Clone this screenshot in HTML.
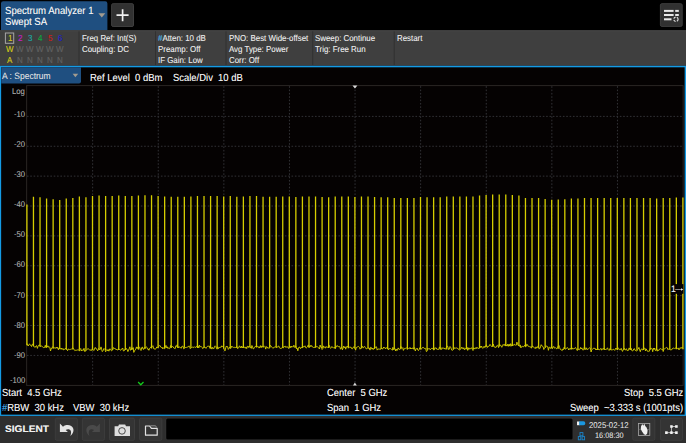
<!DOCTYPE html>
<html><head><meta charset="utf-8"><title>Spectrum Analyzer</title>
<style>
html,body{margin:0;padding:0;background:#000;}
body{width:686px;height:443px;position:relative;overflow:hidden;font-family:"Liberation Sans",Arial,sans-serif;}
.t{position:absolute;white-space:pre;transform:scaleY(1.09) skewX(0.05deg);}
.a{position:absolute;left:0;top:0;}
</style></head><body>

<svg class="a" width="686" height="443" viewBox="0 0 686 443"><path d="M1 30.4V3.4A2.2 2.2 0 0 1 3.2 1.2H105.2A2.2 2.2 0 0 1 107.4 3.4V30.4Z" fill="#1f4f80"/><path d="M98.3 13.3H105.3L101.8 17.6Z" fill="#a39c90"/><rect x="111.60" y="3.70" width="21.90" height="22.80" rx="1.5" fill="#313131" stroke="#3e3e3e" stroke-width="1"/><path d="M122.6 9.2V21.2M116.5 15.2H128.6" stroke="#f0f0f0" stroke-width="1.7" fill="none"/><rect x="660.40" y="3.70" width="21.80" height="22.70" rx="1.5" fill="#313131" stroke="#3e3e3e" stroke-width="1"/><g transform="translate(660 3)"><g fill="#e8e8e8"><rect x="4" y="6.9" width="9.6" height="2"/><rect x="15.2" y="6.9" width="3.6" height="2"/><rect x="4" y="11" width="9.6" height="2"/><rect x="15.2" y="11" width="3.6" height="2"/><rect x="4" y="15.3" width="7.5" height="2"/></g><circle cx="15.9" cy="16.3" r="2.2" fill="none" stroke="#e8e8e8" stroke-width="1.1" stroke-dasharray="2.2 1.2"/></g><rect x="0" y="30.3" width="686" height="35.6" fill="#3f3f3f"/><rect x="0" y="30.3" width="686" height="1" fill="#474747"/><rect x="78.5" y="31.3" width="1" height="34" fill="#313131"/><rect x="155.0" y="31.3" width="1" height="34" fill="#313131"/><rect x="225.5" y="31.3" width="1" height="34" fill="#313131"/><rect x="312.2" y="31.3" width="1" height="34" fill="#313131"/><rect x="393.7" y="31.3" width="1" height="34" fill="#313131"/><rect x="5.4" y="33" width="8.3" height="10.3" fill="none" stroke="#a6a6a6" stroke-width="1"/><rect x="0" y="65" width="686" height="0.9" fill="#343436"/><rect x="0" y="65.8" width="686" height="350.2" fill="#149ae4"/><rect x="1.15" y="67.3" width="683.5" height="347.35" fill="#050202"/><path d="M1.25 67.3H81V81.4A2 2 0 0 1 79 83.4H1.25Z" fill="#1f4f80"/><path d="M72.6 73.7H78.2L75.4 77.3Z" fill="#a39c90"/><rect x="0" y="415.9" width="686" height="27.1" fill="#2e2e2e"/><rect x="55.30" y="418.10" width="22.00" height="22.20" rx="1.5" fill="#343434" stroke="#3d3d3d" stroke-width="1"/><rect x="82.40" y="418.10" width="22.00" height="22.20" rx="1.5" fill="#343434" stroke="#3d3d3d" stroke-width="1"/><rect x="109.50" y="418.10" width="25.00" height="22.20" rx="1.5" fill="#343434" stroke="#3d3d3d" stroke-width="1"/><rect x="139.60" y="418.10" width="22.20" height="22.20" rx="1.5" fill="#343434" stroke="#3d3d3d" stroke-width="1"/><rect x="632.80" y="418.10" width="22.00" height="22.20" rx="1.5" fill="#343434" stroke="#3d3d3d" stroke-width="1"/><rect x="660.60" y="418.10" width="21.80" height="22.20" rx="1.5" fill="#343434" stroke="#3d3d3d" stroke-width="1"/><rect x="165.6" y="418" width="407.6" height="22.1" rx="2" fill="#373737"/><rect x="166.2" y="418.6" width="406.4" height="20.9" rx="1.5" fill="#000"/></svg>
<svg class="a" width="686" height="443" viewBox="0 0 686 443"><rect x="26.65" y="85.60000000000001" width="656.5" height="299.8" fill="none" stroke="#2b2624" stroke-width="1"/><g stroke="#323236" stroke-width="1" stroke-dasharray="1.6 1.75" fill="none"><path d="M26.9 116.38H682.9"/><path d="M92.65 86.2V385.00"/><path d="M26.9 146.26H682.9"/><path d="M158.25 86.2V385.00"/><path d="M26.9 176.14H682.9"/><path d="M223.85 86.2V385.00"/><path d="M26.9 206.02H682.9"/><path d="M289.45 86.2V385.00"/><path d="M26.9 235.90H682.9"/><path d="M355.05 86.2V385.00"/><path d="M26.9 265.78H682.9"/><path d="M420.65 86.2V385.00"/><path d="M26.9 295.66H682.9"/><path d="M486.25 86.2V385.00"/><path d="M26.9 325.54H682.9"/><path d="M551.85 86.2V385.00"/><path d="M26.9 355.42H682.9"/><path d="M617.45 86.2V385.00"/></g><path d="M26.90 204.6V345.3M33.46 196.8V346.3M40.02 197.2V346.8M46.58 198.5V347.8M53.14 199.3V348.4M59.70 200.1V348.8M66.26 198.5V349.5M72.82 197.9V349.6M79.38 196.6V349.7M85.94 197.2V349.8M92.50 196.0V349.8M99.06 195.6V349.8M105.62 196.0V349.9M112.18 196.0V349.9M118.74 195.6V350.0M125.30 196.0V350.0M131.86 196.0V349.9M138.42 195.4V349.5M144.98 195.2V349.0M151.54 195.2V348.5M158.10 196.0V348.1M164.66 196.4V348.1M171.22 196.8V348.0M177.78 196.8V347.9M184.34 196.8V347.8M190.90 196.4V347.8M197.46 196.0V347.9M204.02 196.0V348.1M210.58 196.0V348.3M217.14 196.0V348.4M223.70 196.4V348.4M230.26 196.0V348.2M236.82 196.8V347.9M243.38 196.4V347.7M249.94 196.0V347.6M256.50 196.0V347.6M263.06 196.8V347.6M269.62 196.8V347.6M276.18 196.8V347.6M282.74 196.4V347.7M289.30 196.4V347.7M295.86 197.0V347.7M302.42 196.4V347.7M308.98 196.4V347.7M315.54 196.4V347.8M322.10 197.0V347.9M328.66 197.2V348.0M335.22 196.4V348.1M341.78 196.4V348.2M348.34 196.4V348.3M354.90 197.0V348.4M361.46 196.4V348.4M368.02 196.4V348.5M374.58 197.0V348.7M381.14 197.2V348.9M387.70 197.2V349.1M394.26 197.9V349.2M400.82 197.9V349.3M407.38 197.9V349.4M413.94 197.9V349.4M420.50 197.0V349.4M427.06 197.2V349.4M433.62 197.2V349.4M440.18 197.2V349.4M446.74 196.6V349.4M453.30 196.6V349.3M459.86 196.6V349.3M466.42 196.4V349.2M472.98 196.6V349.0M479.54 195.6V348.0M486.10 195.0V347.0M492.66 194.4V346.7M499.22 194.4V346.5M505.78 194.4V346.1M512.34 195.0V345.9M518.90 195.4V345.9M525.46 197.9V346.5M532.02 197.9V347.2M538.58 197.9V347.7M545.14 198.9V347.8M551.70 199.7V348.2M558.26 199.5V348.7M564.82 199.3V349.1M571.38 198.5V349.4M577.94 198.5V349.4M584.50 198.1V349.5M591.06 198.1V349.6M597.62 197.9V349.7M604.18 198.1V349.9M610.74 197.9V350.0M617.30 197.9V350.1M623.86 197.9V350.1M630.42 198.1V350.1M636.98 198.1V350.0M643.54 198.1V349.9M650.10 198.1V349.8M656.66 198.5V349.8M663.22 198.1V349.7M669.78 198.1V349.5M676.34 197.4V349.3M682.90 197.4V349.2" fill="none" stroke="#d6ce00" stroke-width="1.3"/><path d="M26.9 343.5 L27.6 344.9 L28.2 346.0 L28.9 344.8 L29.5 343.8 L30.2 344.9 L30.8 345.7 L31.5 346.5 L32.1 344.5 L32.8 344.1 L33.5 346.1 L34.1 346.3 L34.8 347.4 L35.4 347.1 L36.1 346.0 L36.7 345.6 L37.4 348.4 L38.1 346.2 L38.7 345.3 L39.4 344.8 L40.0 346.0 L40.7 346.4 L41.3 346.0 L42.0 346.3 L42.6 346.8 L43.3 347.4 L44.0 348.0 L44.6 347.4 L45.3 345.3 L45.9 347.5 L46.6 345.9 L47.2 346.9 L47.9 345.8 L48.5 347.2 L49.2 346.7 L49.9 347.7 L50.5 351.0 L51.2 348.4 L51.8 348.7 L52.5 346.7 L53.1 347.3 L53.8 348.4 L54.5 347.8 L55.1 348.2 L55.8 348.1 L56.4 347.0 L57.1 348.3 L57.7 347.3 L58.4 349.8 L59.0 348.0 L59.7 348.9 L60.4 348.4 L61.0 349.3 L61.7 348.0 L62.3 349.4 L63.0 348.6 L63.6 349.9 L64.3 349.6 L64.9 349.1 L65.6 348.1 L66.3 349.5 L66.9 349.5 L67.6 350.7 L68.2 348.9 L68.9 349.5 L69.5 349.6 L70.2 349.4 L70.9 349.3 L71.5 349.2 L72.2 348.5 L72.8 347.9 L73.5 348.4 L74.1 349.5 L74.8 350.6 L75.4 350.3 L76.1 350.4 L76.8 350.1 L77.4 350.0 L78.1 349.5 L78.7 349.9 L79.4 351.1 L80.0 349.2 L80.7 348.5 L81.3 351.0 L82.0 349.8 L82.7 350.3 L83.3 350.3 L84.0 348.3 L84.6 351.4 L85.3 351.4 L85.9 349.8 L86.6 350.1 L87.3 349.5 L87.9 348.4 L88.6 348.9 L89.2 349.5 L89.9 350.4 L90.5 350.1 L91.2 349.5 L91.8 350.6 L92.5 348.7 L93.2 349.9 L93.8 350.5 L94.5 349.2 L95.1 347.4 L95.8 348.0 L96.4 349.2 L97.1 349.8 L97.7 350.9 L98.4 348.6 L99.1 349.1 L99.7 349.9 L100.4 349.2 L101.0 346.9 L101.7 349.6 L102.3 351.6 L103.0 350.8 L103.7 348.7 L104.3 348.7 L105.0 349.4 L105.6 351.8 L106.3 350.4 L106.9 349.6 L107.6 350.9 L108.2 349.6 L108.9 351.2 L109.6 349.0 L110.2 348.8 L110.9 349.9 L111.5 350.9 L112.2 350.3 L112.8 349.8 L113.5 347.6 L114.1 348.3 L114.8 348.5 L115.5 348.7 L116.1 349.8 L116.8 349.1 L117.4 350.1 L118.1 349.6 L118.7 349.1 L119.4 349.4 L120.1 349.8 L120.7 350.3 L121.4 349.1 L122.0 349.1 L122.7 348.0 L123.3 350.7 L124.0 351.1 L124.6 349.6 L125.3 349.0 L126.0 348.1 L126.6 349.3 L127.3 349.6 L127.9 351.6 L128.6 350.1 L129.2 348.7 L129.9 346.8 L130.5 350.2 L131.2 349.7 L131.9 347.8 L132.5 349.1 L133.2 347.6 L133.8 352.4 L134.5 350.9 L135.1 350.0 L135.8 349.1 L136.5 346.9 L137.1 348.4 L137.8 347.3 L138.4 349.2 L139.1 346.8 L139.7 347.5 L140.4 349.7 L141.0 350.5 L141.7 347.8 L142.4 346.9 L143.0 349.1 L143.7 349.4 L144.3 347.6 L145.0 347.5 L145.6 347.4 L146.3 346.9 L146.9 347.3 L147.6 349.2 L148.3 349.0 L148.9 350.3 L149.6 348.4 L150.2 347.9 L150.9 346.9 L151.5 347.5 L152.2 346.4 L152.9 345.7 L153.5 348.0 L154.2 349.2 L154.8 348.8 L155.5 349.2 L156.1 348.2 L156.8 347.0 L157.4 347.5 L158.1 347.2 L158.8 346.3 L159.4 345.6 L160.1 345.6 L160.7 347.1 L161.4 347.6 L162.0 347.0 L162.7 348.8 L163.3 347.9 L164.0 348.2 L164.7 348.8 L165.3 346.9 L166.0 345.4 L166.6 347.8 L167.3 346.8 L167.9 348.6 L168.6 348.0 L169.3 348.6 L169.9 348.4 L170.6 345.5 L171.2 347.7 L171.9 346.8 L172.5 346.5 L173.2 346.8 L173.8 348.0 L174.5 348.4 L175.2 348.6 L175.8 345.9 L176.5 346.4 L177.1 344.8 L177.8 346.7 L178.4 347.8 L179.1 346.6 L179.7 347.4 L180.4 347.5 L181.1 348.3 L181.7 346.6 L182.4 346.3 L183.0 346.3 L183.7 348.8 L184.3 348.6 L185.0 347.4 L185.7 347.5 L186.3 347.4 L187.0 347.4 L187.6 347.0 L188.3 346.8 L188.9 345.9 L189.6 346.3 L190.2 348.7 L190.9 348.0 L191.6 347.5 L192.2 347.1 L192.9 347.3 L193.5 347.6 L194.2 346.7 L194.8 347.3 L195.5 347.5 L196.1 346.6 L196.8 346.4 L197.5 346.1 L198.1 346.0 L198.8 348.0 L199.4 345.1 L200.1 346.7 L200.7 346.6 L201.4 346.6 L202.1 347.4 L202.7 348.6 L203.4 347.8 L204.0 347.4 L204.7 346.9 L205.3 347.3 L206.0 348.4 L206.6 347.3 L207.3 346.4 L208.0 346.1 L208.6 346.2 L209.3 346.0 L209.9 348.4 L210.6 348.2 L211.2 347.5 L211.9 349.1 L212.5 347.3 L213.2 348.4 L213.9 348.7 L214.5 346.4 L215.2 345.9 L215.8 346.5 L216.5 348.4 L217.1 349.2 L217.8 346.8 L218.5 348.6 L219.1 347.6 L219.8 347.4 L220.4 347.2 L221.1 347.3 L221.7 345.9 L222.4 346.4 L223.0 346.3 L223.7 348.0 L224.4 349.9 L225.0 350.9 L225.7 348.0 L226.3 346.1 L227.0 347.0 L227.6 346.6 L228.3 349.4 L228.9 348.6 L229.6 347.1 L230.3 348.4 L230.9 348.3 L231.6 346.1 L232.2 346.7 L232.9 347.1 L233.5 347.4 L234.2 347.6 L234.9 347.1 L235.5 347.5 L236.2 346.8 L236.8 346.3 L237.5 348.6 L238.1 347.9 L238.8 347.8 L239.4 345.8 L240.1 346.8 L240.8 347.9 L241.4 346.0 L242.1 348.0 L242.7 346.9 L243.4 347.5 L244.0 347.0 L244.7 347.3 L245.3 348.3 L246.0 346.9 L246.7 348.6 L247.3 346.5 L248.0 346.0 L248.6 347.5 L249.3 346.0 L249.9 346.4 L250.6 347.8 L251.3 348.4 L251.9 345.5 L252.6 347.2 L253.2 348.9 L253.9 348.6 L254.5 347.1 L255.2 346.4 L255.8 346.6 L256.5 345.8 L257.2 346.5 L257.8 346.7 L258.5 346.8 L259.1 348.1 L259.8 347.0 L260.4 345.6 L261.1 347.8 L261.7 346.1 L262.4 346.4 L263.1 346.8 L263.7 346.6 L264.4 345.9 L265.0 346.6 L265.7 349.1 L266.3 346.8 L267.0 346.8 L267.7 348.1 L268.3 348.0 L269.0 348.0 L269.6 348.1 L270.3 345.3 L270.9 345.8 L271.6 346.9 L272.2 347.5 L272.9 348.4 L273.6 347.8 L274.2 347.0 L274.9 347.1 L275.5 346.8 L276.2 347.2 L276.8 347.8 L277.5 346.9 L278.1 346.2 L278.8 346.0 L279.5 347.9 L280.1 348.5 L280.8 348.3 L281.4 348.2 L282.1 348.1 L282.7 347.3 L283.4 347.8 L284.1 346.2 L284.7 346.7 L285.4 346.3 L286.0 347.6 L286.7 346.6 L287.3 346.9 L288.0 347.4 L288.6 348.5 L289.3 346.6 L290.0 346.0 L290.6 347.7 L291.3 346.1 L291.9 347.3 L292.6 346.6 L293.2 346.9 L293.9 345.2 L294.5 347.4 L295.2 346.7 L295.9 346.1 L296.5 349.0 L297.2 348.2 L297.8 350.8 L298.5 348.2 L299.1 347.0 L299.8 347.2 L300.5 348.7 L301.1 347.4 L301.8 347.6 L302.4 347.7 L303.1 346.3 L303.7 347.1 L304.4 346.6 L305.0 345.8 L305.7 347.7 L306.4 347.9 L307.0 347.3 L307.7 346.2 L308.3 344.9 L309.0 347.2 L309.6 347.0 L310.3 345.4 L310.9 346.7 L311.6 345.5 L312.3 346.8 L312.9 347.2 L313.6 347.5 L314.2 347.4 L314.9 347.4 L315.5 346.1 L316.2 346.6 L316.9 346.5 L317.5 346.8 L318.2 347.4 L318.8 347.9 L319.5 349.0 L320.1 345.0 L320.8 347.2 L321.4 347.0 L322.1 349.5 L322.8 348.6 L323.4 345.9 L324.1 347.4 L324.7 346.8 L325.4 348.2 L326.0 346.5 L326.7 347.1 L327.3 347.2 L328.0 347.2 L328.7 346.8 L329.3 345.4 L330.0 347.5 L330.6 348.4 L331.3 347.6 L331.9 346.5 L332.6 347.5 L333.3 348.0 L333.9 347.4 L334.6 347.5 L335.2 348.9 L335.9 346.7 L336.5 346.8 L337.2 345.5 L337.8 346.5 L338.5 346.6 L339.2 346.4 L339.8 346.7 L340.5 349.2 L341.1 347.8 L341.8 347.6 L342.4 349.8 L343.1 348.0 L343.7 346.0 L344.4 347.8 L345.1 346.8 L345.7 349.2 L346.4 346.8 L347.0 347.0 L347.7 346.0 L348.3 347.5 L349.0 346.7 L349.7 347.5 L350.3 347.3 L351.0 347.1 L351.6 348.6 L352.3 348.9 L352.9 348.1 L353.6 346.9 L354.2 346.6 L354.9 347.8 L355.6 350.2 L356.2 347.8 L356.9 347.0 L357.5 346.9 L358.2 346.5 L358.8 346.6 L359.5 347.4 L360.1 349.2 L360.8 348.1 L361.5 347.4 L362.1 346.1 L362.8 347.7 L363.4 347.8 L364.1 346.6 L364.7 346.5 L365.4 347.6 L366.1 348.8 L366.7 348.7 L367.4 348.3 L368.0 347.7 L368.7 348.2 L369.3 348.0 L370.0 350.1 L370.6 347.3 L371.3 347.5 L372.0 349.2 L372.6 348.0 L373.3 349.5 L373.9 348.3 L374.6 348.3 L375.2 347.8 L375.9 346.7 L376.5 346.9 L377.2 350.1 L377.9 349.2 L378.5 349.0 L379.2 349.3 L379.8 349.0 L380.5 349.4 L381.1 348.2 L381.8 348.0 L382.5 349.2 L383.1 348.2 L383.8 347.0 L384.4 347.9 L385.1 347.7 L385.7 348.9 L386.4 347.8 L387.0 347.2 L387.7 347.9 L388.4 349.9 L389.0 348.7 L389.7 348.7 L390.3 348.6 L391.0 348.8 L391.6 349.5 L392.3 350.2 L392.9 347.3 L393.6 349.7 L394.3 348.8 L394.9 348.4 L395.6 351.0 L396.2 349.0 L396.9 350.7 L397.5 350.1 L398.2 347.9 L398.9 349.1 L399.5 349.5 L400.2 348.8 L400.8 346.4 L401.5 347.9 L402.1 348.4 L402.8 347.6 L403.4 350.4 L404.1 348.9 L404.8 348.4 L405.4 348.4 L406.1 347.9 L406.7 347.9 L407.4 348.7 L408.0 349.1 L408.7 348.4 L409.3 348.6 L410.0 347.4 L410.7 349.0 L411.3 348.1 L412.0 348.9 L412.6 347.9 L413.3 348.1 L413.9 348.9 L414.6 347.6 L415.3 351.0 L415.9 349.2 L416.6 348.8 L417.2 348.1 L417.9 350.2 L418.5 350.5 L419.2 349.4 L419.8 347.6 L420.5 348.0 L421.2 349.3 L421.8 348.4 L422.5 347.5 L423.1 347.4 L423.8 347.7 L424.4 348.6 L425.1 348.1 L425.7 348.7 L426.4 351.6 L427.1 351.1 L427.7 348.2 L428.4 349.0 L429.0 348.9 L429.7 348.7 L430.3 349.8 L431.0 348.7 L431.7 348.4 L432.3 348.4 L433.0 348.6 L433.6 350.0 L434.3 349.8 L434.9 347.7 L435.6 348.1 L436.2 347.9 L436.9 349.4 L437.6 349.2 L438.2 349.8 L438.9 348.9 L439.5 346.9 L440.2 348.9 L440.8 349.0 L441.5 349.4 L442.1 347.6 L442.8 348.6 L443.5 348.1 L444.1 348.0 L444.8 349.0 L445.4 349.2 L446.1 348.0 L446.7 346.9 L447.4 345.9 L448.1 347.6 L448.7 349.7 L449.4 348.9 L450.0 346.5 L450.7 347.4 L451.3 348.9 L452.0 350.4 L452.6 350.2 L453.3 349.4 L454.0 349.0 L454.6 347.7 L455.3 348.1 L455.9 348.2 L456.6 347.8 L457.2 348.6 L457.9 348.3 L458.5 348.9 L459.2 350.1 L459.9 349.7 L460.5 349.3 L461.2 348.5 L461.8 347.1 L462.5 348.2 L463.1 349.1 L463.8 347.7 L464.5 349.7 L465.1 348.5 L465.8 349.0 L466.4 348.3 L467.1 347.3 L467.7 350.4 L468.4 347.8 L469.0 349.4 L469.7 348.2 L470.4 348.8 L471.0 347.8 L471.7 348.0 L472.3 349.3 L473.0 350.5 L473.6 347.9 L474.3 348.2 L474.9 349.1 L475.6 347.7 L476.3 348.6 L476.9 347.2 L477.6 348.2 L478.2 348.2 L478.9 348.8 L479.5 348.0 L480.2 346.2 L480.9 347.6 L481.5 346.0 L482.2 347.5 L482.8 348.4 L483.5 347.6 L484.1 346.2 L484.8 347.6 L485.4 346.8 L486.1 345.2 L486.8 345.7 L487.4 347.5 L488.1 346.2 L488.7 346.3 L489.4 345.9 L490.0 344.4 L490.7 345.3 L491.3 346.4 L492.0 346.4 L492.7 346.0 L493.3 344.0 L494.0 346.9 L494.6 347.0 L495.3 347.3 L495.9 347.6 L496.6 345.9 L497.3 345.3 L497.9 346.1 L498.6 347.6 L499.2 344.5 L499.9 345.3 L500.5 345.0 L501.2 346.2 L501.8 347.3 L502.5 345.7 L503.2 344.4 L503.8 345.4 L504.5 345.3 L505.1 343.9 L505.8 346.1 L506.4 345.1 L507.1 346.1 L507.7 344.2 L508.4 346.3 L509.1 344.1 L509.7 346.1 L510.4 343.7 L511.0 346.3 L511.7 345.1 L512.3 343.7 L513.0 344.7 L513.7 345.4 L514.3 344.3 L515.0 344.5 L515.6 345.3 L516.3 345.1 L516.9 342.1 L517.6 344.2 L518.2 345.5 L518.9 345.6 L519.6 346.4 L520.2 344.9 L520.9 347.9 L521.5 346.7 L522.2 346.1 L522.8 346.8 L523.5 346.8 L524.1 346.0 L524.8 345.2 L525.5 346.8 L526.1 346.5 L526.8 344.2 L527.4 344.6 L528.1 346.3 L528.7 346.4 L529.4 346.6 L530.1 347.1 L530.7 346.8 L531.4 348.2 L532.0 346.3 L532.7 346.2 L533.3 347.0 L534.0 347.6 L534.6 347.8 L535.3 348.6 L536.0 346.8 L536.6 348.1 L537.3 347.7 L537.9 346.2 L538.6 346.8 L539.2 349.1 L539.9 348.3 L540.5 346.9 L541.2 344.7 L541.9 345.9 L542.5 346.2 L543.2 347.0 L543.8 349.5 L544.5 348.4 L545.1 347.8 L545.8 346.4 L546.5 345.9 L547.1 346.8 L547.8 346.8 L548.4 350.3 L549.1 347.6 L549.7 346.9 L550.4 348.5 L551.0 347.8 L551.7 346.4 L552.4 348.7 L553.0 347.6 L553.7 346.4 L554.3 347.8 L555.0 348.3 L555.6 347.6 L556.3 348.6 L556.9 348.9 L557.6 347.3 L558.3 345.9 L558.9 345.3 L559.6 347.5 L560.2 349.3 L560.9 349.5 L561.5 350.0 L562.2 350.6 L562.9 348.9 L563.5 349.6 L564.2 347.2 L564.8 349.0 L565.5 349.1 L566.1 348.6 L566.8 348.2 L567.4 347.5 L568.1 348.6 L568.8 350.0 L569.4 348.6 L570.1 349.3 L570.7 348.2 L571.4 348.9 L572.0 347.8 L572.7 349.0 L573.3 348.6 L574.0 349.1 L574.7 348.3 L575.3 347.5 L576.0 348.2 L576.6 349.7 L577.3 350.6 L577.9 348.8 L578.6 349.6 L579.3 349.7 L579.9 349.4 L580.6 347.4 L581.2 348.9 L581.9 347.9 L582.5 349.8 L583.2 349.9 L583.8 349.7 L584.5 346.5 L585.2 349.0 L585.8 349.6 L586.5 347.8 L587.1 349.7 L587.8 349.2 L588.4 348.8 L589.1 348.2 L589.7 347.8 L590.4 348.3 L591.1 352.0 L591.7 349.8 L592.4 349.4 L593.0 348.5 L593.7 348.3 L594.3 348.4 L595.0 348.1 L595.7 349.8 L596.3 349.0 L597.0 350.0 L597.6 348.1 L598.3 349.9 L598.9 349.3 L599.6 349.9 L600.2 349.2 L600.9 348.3 L601.6 350.2 L602.2 349.0 L602.9 349.0 L603.5 348.3 L604.2 349.3 L604.8 348.9 L605.5 349.5 L606.1 349.7 L606.8 348.7 L607.5 347.8 L608.1 349.5 L608.8 350.3 L609.4 350.2 L610.1 348.4 L610.7 349.8 L611.4 349.9 L612.1 349.8 L612.7 349.9 L613.4 349.2 L614.0 349.6 L614.7 350.4 L615.3 349.1 L616.0 348.0 L616.6 349.1 L617.3 349.6 L618.0 347.7 L618.6 348.4 L619.3 349.9 L619.9 349.4 L620.6 349.6 L621.2 348.3 L621.9 350.2 L622.5 351.4 L623.2 349.7 L623.9 348.8 L624.5 348.2 L625.2 350.1 L625.8 349.7 L626.5 348.7 L627.1 350.6 L627.8 350.5 L628.5 350.3 L629.1 347.9 L629.8 349.1 L630.4 350.0 L631.1 348.3 L631.7 350.2 L632.4 351.0 L633.0 350.8 L633.7 349.0 L634.4 348.6 L635.0 350.2 L635.7 350.6 L636.3 350.9 L637.0 350.9 L637.6 349.6 L638.3 349.0 L638.9 347.4 L639.6 349.8 L640.3 351.7 L640.9 349.4 L641.6 348.9 L642.2 349.9 L642.9 349.8 L643.5 348.0 L644.2 348.3 L644.9 348.0 L645.5 351.0 L646.2 348.9 L646.8 350.0 L647.5 351.3 L648.1 351.6 L648.8 351.1 L649.4 351.2 L650.1 348.4 L650.8 348.7 L651.4 348.4 L652.1 348.8 L652.7 351.7 L653.4 348.0 L654.0 349.5 L654.7 348.0 L655.3 350.3 L656.0 350.7 L656.7 349.0 L657.3 351.2 L658.0 349.7 L658.6 350.6 L659.3 349.8 L659.9 348.7 L660.6 348.7 L661.3 348.9 L661.9 349.7 L662.6 349.4 L663.2 351.5 L663.9 349.4 L664.5 348.7 L665.2 348.3 L665.8 348.1 L666.5 347.4 L667.2 347.7 L667.8 349.6 L668.5 349.2 L669.1 348.8 L669.8 349.2 L670.4 350.0 L671.1 349.7 L671.7 349.8 L672.4 348.5 L673.1 348.5 L673.7 348.0 L674.4 348.5 L675.0 347.9 L675.7 348.2 L676.3 348.4 L677.0 348.4 L677.7 348.4 L678.3 348.1 L679.0 349.9 L679.6 348.5 L680.3 347.6 L680.9 348.6 L681.6 347.5 L682.2 347.3 L682.9 348.4" fill="none" stroke="#d2ca00" stroke-width="0.95" stroke-linejoin="round"/><path d="M352.5 85.6H357.4L354.95 88.5Z" fill="#d8d8d8"/><path d="M353 385.4H356.8L354.9 382.5Z" fill="#d8d8d8"/><path d="M138.1 382L140.8 384.8L143.5 382" fill="none" stroke="#14cc1c" stroke-width="1.25"/><rect x="670.9" y="284.1" width="12.5" height="9.7" fill="#050202"/><path d="M675.2 289.5H682" stroke="#d0d0d0" stroke-width="0.65" fill="none"/><path d="M681 288.3L683.3 289.5L681 290.7Z" fill="#e8e8e8"/></svg>
<svg class="a" width="686" height="443" viewBox="0 0 686 443"><path d="M59.9 423.6V432.1H67.9L65.7 430C67.5 428.8 70.2 429 70.9 431.3C71.3 432.8 70.9 434.3 70.3 435.9C72.6 433.8 73.9 431.5 73.4 428.9C72.6 425.6 68.5 424.3 65.5 425.3C64.5 425.6 63.7 426 63 426.7Z" fill="#e4e4e4"/><g transform="translate(159.8 0) scale(-1 1)"><path d="M59.9 423.6V432.1H67.9L65.7 430C67.5 428.8 70.2 429 70.9 431.3C71.3 432.8 70.9 434.3 70.3 435.9C72.6 433.8 73.9 431.5 73.4 428.9C72.6 425.6 68.5 424.3 65.5 425.3C64.5 425.6 63.7 426 63 426.7Z" fill="#4a4a4a"/></g><path d="M114.6 426.2H118.2L119 424.6H125.2L126 426.2H130V436H114.6Z" fill="#dedede"/><circle cx="122" cy="430.9" r="3.3" fill="#dedede" stroke="#3a3a3a" stroke-width="0.9"/><path d="M145.5 426H149.6L151.4 428.4H157.2V435.2H145.5Z" fill="none" stroke="#e2e2e2" stroke-width="1.2" stroke-linejoin="round"/><path d="M150.3 425.8H155.6L156.6 427.4" fill="none" stroke="#9a9a9a" stroke-width="0.9"/><rect x="577" y="421.5" width="2.6" height="3.7" fill="#f0f0f0"/><path d="M579.3 421.3H583.4A1.9 1.95 0 0 1 583.4 425.3H579.3Z" fill="#1b97df"/><g fill="none" stroke="#1b86cc" stroke-width="0.9"><rect x="580" y="432.6" width="2.9" height="3.2"/><rect x="578.3" y="436.6" width="2.5" height="3.2"/><rect x="582.1" y="436.6" width="2.5" height="3.2"/></g><g fill="none" stroke="#a8a8a8" stroke-width="0.8"><rect x="638.4" y="423.5" width="11.4" height="12"/><path d="M638.4 429.5H649.8M644.1 423.5V435.5" stroke="#808080" stroke-width="0.5"/></g><path d="M641 426.6L642.2 424L643.4 425.8L644.2 423.8L645.4 426.2L646.6 427.6L647.6 430.6L647.2 433.4L645.8 435L644 434.2L642 431.6L640.8 429Z" fill="#f0f0f0"/><g fill="#f2f2f2"><rect x="670.2" y="425.2" width="2.5" height="2.6"/><rect x="675.1" y="425.2" width="2.6" height="2.6"/><rect x="665.1" y="431.3" width="2.6" height="2.7"/><rect x="670.2" y="431.3" width="2.5" height="2.7"/><rect x="675.1" y="431.3" width="2.6" height="2.7"/></g><path d="M671.45 426V433M671 426.5H676M666 432.65H677" stroke="#f2f2f2" stroke-width="0.7" fill="none"/></svg>
<div class="t" style="left:4.5px;top:5.07px;font-size:9.6px;line-height:12px;color:#f2f2f2;text-shadow:0 0 0.6px rgba(242,242,242,0.55);transform-origin:left 9.33px;">Spectrum Analyzer 1</div>
<div class="t" style="left:4.5px;top:16.37px;font-size:9.6px;line-height:12px;color:#f2f2f2;text-shadow:0 0 0.6px rgba(242,242,242,0.55);transform-origin:left 9.33px;">Swept SA</div>
<div class="t" style="left:7.8px;top:33.63px;font-size:8px;line-height:10px;color:#c9c11c;text-shadow:0 0 0.6px rgba(201,193,28,0.55);transform-origin:left 7.77px;">1</div>
<div class="t" style="left:6.2px;top:44.63px;font-size:8px;line-height:10px;color:#c9c11c;text-shadow:0 0 0.6px rgba(201,193,28,0.55);transform-origin:left 7.77px;">W</div>
<div class="t" style="left:7.3px;top:55.53px;font-size:8px;line-height:10px;color:#c9c11c;text-shadow:0 0 0.6px rgba(201,193,28,0.55);transform-origin:left 7.77px;">A</div>
<div class="t" style="left:17.8px;top:33.63px;font-size:8px;line-height:10px;color:#c01fc0;text-shadow:0 0 0.6px rgba(192,31,192,0.55);transform-origin:left 7.77px;">2</div>
<div class="t" style="left:16.2px;top:44.63px;font-size:8px;line-height:10px;color:#5f5f5f;text-shadow:0 0 0.6px rgba(95,95,95,0.55);transform-origin:left 7.77px;">W</div>
<div class="t" style="left:17.1px;top:55.53px;font-size:8px;line-height:10px;color:#5f5f5f;text-shadow:0 0 0.6px rgba(95,95,95,0.55);transform-origin:left 7.77px;">N</div>
<div class="t" style="left:27.8px;top:33.63px;font-size:8px;line-height:10px;color:#1fa3a3;text-shadow:0 0 0.6px rgba(31,163,163,0.55);transform-origin:left 7.77px;">3</div>
<div class="t" style="left:26.2px;top:44.63px;font-size:8px;line-height:10px;color:#5f5f5f;text-shadow:0 0 0.6px rgba(95,95,95,0.55);transform-origin:left 7.77px;">W</div>
<div class="t" style="left:27.1px;top:55.53px;font-size:8px;line-height:10px;color:#5f5f5f;text-shadow:0 0 0.6px rgba(95,95,95,0.55);transform-origin:left 7.77px;">N</div>
<div class="t" style="left:37.8px;top:33.63px;font-size:8px;line-height:10px;color:#12a040;text-shadow:0 0 0.6px rgba(18,160,64,0.55);transform-origin:left 7.77px;">4</div>
<div class="t" style="left:36.2px;top:44.63px;font-size:8px;line-height:10px;color:#5f5f5f;text-shadow:0 0 0.6px rgba(95,95,95,0.55);transform-origin:left 7.77px;">W</div>
<div class="t" style="left:37.1px;top:55.53px;font-size:8px;line-height:10px;color:#5f5f5f;text-shadow:0 0 0.6px rgba(95,95,95,0.55);transform-origin:left 7.77px;">N</div>
<div class="t" style="left:47.8px;top:33.63px;font-size:8px;line-height:10px;color:#c31f1f;text-shadow:0 0 0.6px rgba(195,31,31,0.55);transform-origin:left 7.77px;">5</div>
<div class="t" style="left:46.2px;top:44.63px;font-size:8px;line-height:10px;color:#5f5f5f;text-shadow:0 0 0.6px rgba(95,95,95,0.55);transform-origin:left 7.77px;">W</div>
<div class="t" style="left:47.1px;top:55.53px;font-size:8px;line-height:10px;color:#5f5f5f;text-shadow:0 0 0.6px rgba(95,95,95,0.55);transform-origin:left 7.77px;">N</div>
<div class="t" style="left:57.8px;top:33.63px;font-size:8px;line-height:10px;color:#2222c8;text-shadow:0 0 0.6px rgba(34,34,200,0.55);transform-origin:left 7.77px;">6</div>
<div class="t" style="left:56.2px;top:44.63px;font-size:8px;line-height:10px;color:#5f5f5f;text-shadow:0 0 0.6px rgba(95,95,95,0.55);transform-origin:left 7.77px;">W</div>
<div class="t" style="left:57.1px;top:55.53px;font-size:8px;line-height:10px;color:#5f5f5f;text-shadow:0 0 0.6px rgba(95,95,95,0.55);transform-origin:left 7.77px;">N</div>
<div class="t" style="left:81.6px;top:33.76px;font-size:7.9px;line-height:10px;color:#e4e4e4;text-shadow:0 0 0.6px rgba(228,228,228,0.55);transform-origin:left 7.74px;">Freq Ref: Int(S)</div>
<div class="t" style="left:81.6px;top:44.86px;font-size:7.9px;line-height:10px;color:#e4e4e4;text-shadow:0 0 0.6px rgba(228,228,228,0.55);transform-origin:left 7.74px;">Coupling: DC</div>
<div class="t" style="left:157.6px;top:33.76px;font-size:7.9px;line-height:10px;color:#e4e4e4;text-shadow:0 0 0.6px rgba(228,228,228,0.55);transform-origin:left 7.74px;"><span style="color:#22a6f0">#</span>Atten: 10 dB</div>
<div class="t" style="left:157.6px;top:44.86px;font-size:7.9px;line-height:10px;color:#e4e4e4;text-shadow:0 0 0.6px rgba(228,228,228,0.55);transform-origin:left 7.74px;">Preamp: Off</div>
<div class="t" style="left:157.6px;top:55.56px;font-size:7.9px;line-height:10px;color:#e4e4e4;text-shadow:0 0 0.6px rgba(228,228,228,0.55);transform-origin:left 7.74px;">IF Gain: Low</div>
<div class="t" style="left:228.5px;top:33.76px;font-size:7.9px;line-height:10px;color:#e4e4e4;text-shadow:0 0 0.6px rgba(228,228,228,0.55);transform-origin:left 7.74px;">PNO: Best Wide-offset</div>
<div class="t" style="left:228.5px;top:44.86px;font-size:7.9px;line-height:10px;color:#e4e4e4;text-shadow:0 0 0.6px rgba(228,228,228,0.55);transform-origin:left 7.74px;">Avg Type: Power</div>
<div class="t" style="left:228.5px;top:55.56px;font-size:7.9px;line-height:10px;color:#e4e4e4;text-shadow:0 0 0.6px rgba(228,228,228,0.55);transform-origin:left 7.74px;">Corr: Off</div>
<div class="t" style="left:315.1px;top:33.76px;font-size:7.9px;line-height:10px;color:#e4e4e4;text-shadow:0 0 0.6px rgba(228,228,228,0.55);transform-origin:left 7.74px;">Sweep: Continue</div>
<div class="t" style="left:315.1px;top:44.86px;font-size:7.9px;line-height:10px;color:#e4e4e4;text-shadow:0 0 0.6px rgba(228,228,228,0.55);transform-origin:left 7.74px;">Trig: Free Run</div>
<div class="t" style="left:396.7px;top:33.76px;font-size:7.9px;line-height:10px;color:#e4e4e4;text-shadow:0 0 0.6px rgba(228,228,228,0.55);transform-origin:left 7.74px;">Restart</div>
<div class="t" style="left:2.3px;top:70.65px;font-size:8.5px;line-height:11px;color:#d4d8dc;text-shadow:0 0 0.6px rgba(212,216,220,0.55);transform-origin:left 8.45px;">A : Spectrum</div>
<div class="t" style="left:89.6px;top:72.23px;font-size:9.45px;line-height:12px;color:#f0f0f0;text-shadow:0 0 0.6px rgba(240,240,240,0.55);transform-origin:left 9.27px;">Ref Level  0 dBm</div>
<div class="t" style="left:173.4px;top:72.23px;font-size:9.45px;line-height:12px;color:#f0f0f0;text-shadow:0 0 0.6px rgba(240,240,240,0.55);transform-origin:left 9.27px;">Scale/Div  10 dB</div>
<div class="t" style="right:660.7px;top:86.98px;font-size:7.7px;line-height:10px;color:#a2a2a2;text-shadow:0 0 0.6px rgba(162,162,162,0.55);transform-origin:right 7.67px;">Log</div>
<div class="t" style="right:661.0px;top:110.23px;font-size:7.7px;line-height:10px;color:#a2a2a2;text-shadow:0 0 0.6px rgba(162,162,162,0.55);transform-origin:right 7.67px;">-10</div>
<div class="t" style="right:661.0px;top:140.28px;font-size:7.7px;line-height:10px;color:#a2a2a2;text-shadow:0 0 0.6px rgba(162,162,162,0.55);transform-origin:right 7.67px;">-20</div>
<div class="t" style="right:661.0px;top:170.33px;font-size:7.7px;line-height:10px;color:#a2a2a2;text-shadow:0 0 0.6px rgba(162,162,162,0.55);transform-origin:right 7.67px;">-30</div>
<div class="t" style="right:661.0px;top:200.38px;font-size:7.7px;line-height:10px;color:#a2a2a2;text-shadow:0 0 0.6px rgba(162,162,162,0.55);transform-origin:right 7.67px;">-40</div>
<div class="t" style="right:661.0px;top:230.43px;font-size:7.7px;line-height:10px;color:#a2a2a2;text-shadow:0 0 0.6px rgba(162,162,162,0.55);transform-origin:right 7.67px;">-50</div>
<div class="t" style="right:661.0px;top:260.48px;font-size:7.7px;line-height:10px;color:#a2a2a2;text-shadow:0 0 0.6px rgba(162,162,162,0.55);transform-origin:right 7.67px;">-60</div>
<div class="t" style="right:661.0px;top:290.53px;font-size:7.7px;line-height:10px;color:#a2a2a2;text-shadow:0 0 0.6px rgba(162,162,162,0.55);transform-origin:right 7.67px;">-70</div>
<div class="t" style="right:661.0px;top:320.58px;font-size:7.7px;line-height:10px;color:#a2a2a2;text-shadow:0 0 0.6px rgba(162,162,162,0.55);transform-origin:right 7.67px;">-80</div>
<div class="t" style="right:661.0px;top:350.63px;font-size:7.7px;line-height:10px;color:#a2a2a2;text-shadow:0 0 0.6px rgba(162,162,162,0.55);transform-origin:right 7.67px;">-90</div>
<div class="t" style="right:661.0px;top:376.13px;font-size:7.7px;line-height:10px;color:#a2a2a2;text-shadow:0 0 0.6px rgba(162,162,162,0.55);transform-origin:right 7.67px;">-100</div>
<div class="t" style="left:670.9px;top:283.72px;font-size:8.6px;line-height:11px;color:#f0f0f0;text-shadow:0 0 0.6px rgba(240,240,240,0.55);transform-origin:left 8.48px;">1</div>
<div class="t" style="left:2.4px;top:387.33px;font-size:9.45px;line-height:12px;color:#f0f0f0;text-shadow:0 0 0.6px rgba(240,240,240,0.55);transform-origin:left 9.27px;">Start  4.5 GHz</div>
<div class="t" style="left:2.4px;top:401.73px;font-size:9.45px;line-height:12px;color:#f0f0f0;text-shadow:0 0 0.6px rgba(240,240,240,0.55);transform-origin:left 9.27px;"><span style="color:#22a6f0">#</span>RBW  30 kHz</div>
<div class="t" style="left:72.8px;top:401.73px;font-size:9.45px;line-height:12px;color:#f0f0f0;text-shadow:0 0 0.6px rgba(240,240,240,0.55);transform-origin:left 9.27px;">VBW  30 kHz</div>
<div class="t" style="left:326.5px;top:387.33px;font-size:9.45px;line-height:12px;color:#f0f0f0;text-shadow:0 0 0.6px rgba(240,240,240,0.55);transform-origin:left 9.27px;">Center  5 GHz</div>
<div class="t" style="left:326.5px;top:401.73px;font-size:9.45px;line-height:12px;color:#f0f0f0;text-shadow:0 0 0.6px rgba(240,240,240,0.55);transform-origin:left 9.27px;">Span  1 GHz</div>
<div class="t" style="right:3.2px;top:387.33px;font-size:9.45px;line-height:12px;color:#f0f0f0;text-shadow:0 0 0.6px rgba(240,240,240,0.55);transform-origin:right 9.27px;">Stop  5.5 GHz</div>
<div class="t" style="right:3.2px;top:401.73px;font-size:9.45px;line-height:12px;color:#f0f0f0;text-shadow:0 0 0.6px rgba(240,240,240,0.55);transform-origin:right 9.27px;">Sweep  ~3.333 s (1001pts)</div>
<div class="t" style="left:4.9px;top:423.28px;font-size:9.3px;line-height:12px;color:#f0f0f0;text-shadow:0 0 0.6px rgba(240,240,240,0.55);transform-origin:left 9.22px;font-weight:bold;transform:scale(1.09,1.03) skewX(0.05deg)">SIGLENT</div>
<div class="t" style="left:589.1px;top:420.51px;font-size:7.75px;line-height:10px;color:#d6d6d6;text-shadow:0 0 0.6px rgba(214,214,214,0.55);transform-origin:left 7.69px;">2025-02-12</div>
<div class="t" style="left:594.6px;top:430.75px;font-size:7.35px;line-height:9px;color:#d6d6d6;text-shadow:0 0 0.6px rgba(214,214,214,0.55);transform-origin:left 7.05px;">16:08:30</div>
</body></html>
